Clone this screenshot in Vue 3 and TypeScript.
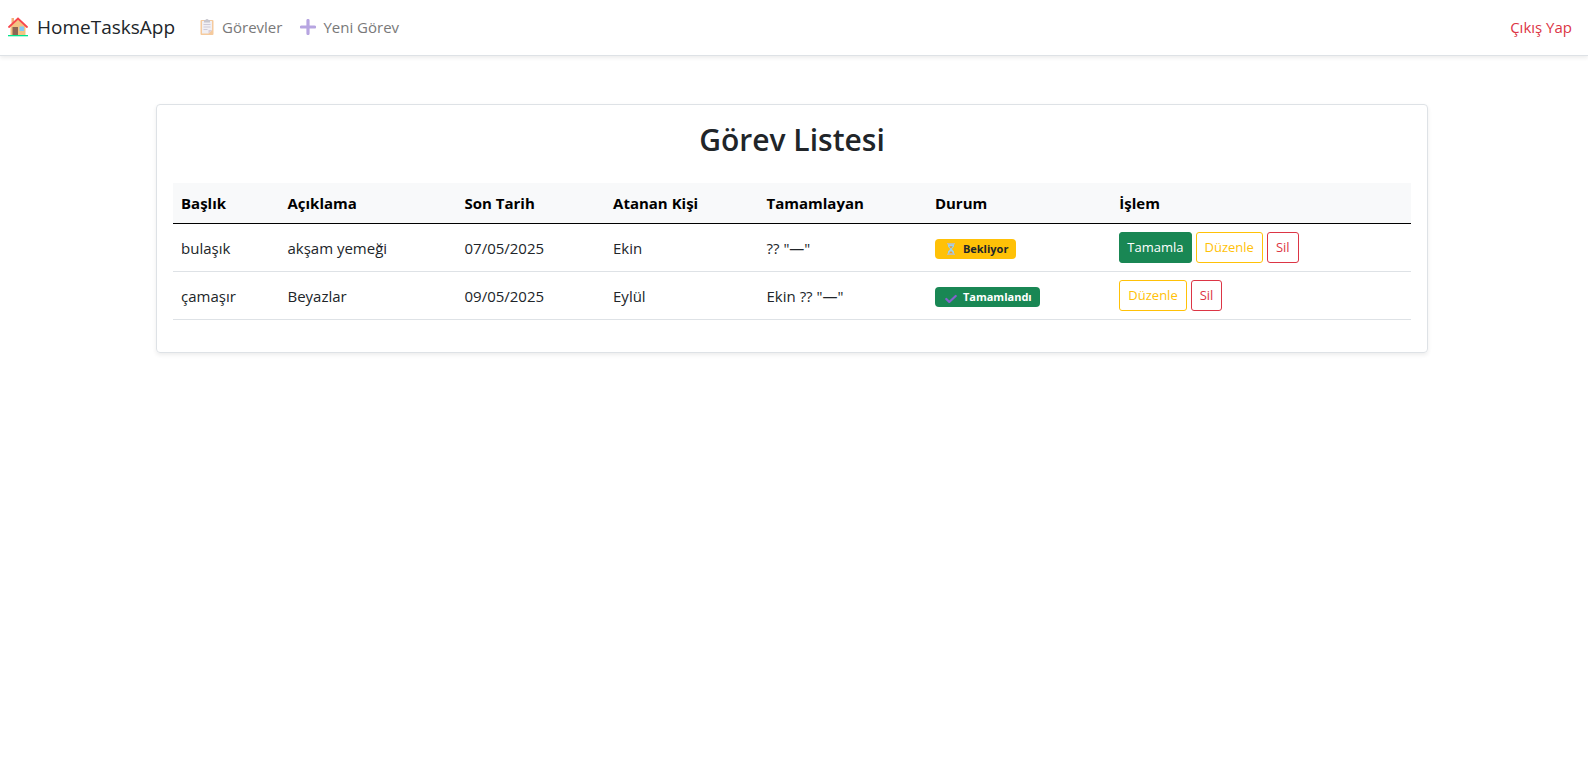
<script setup lang="ts">
interface Task {
  id: number
  title: string
  description: string
  due: string
  assignee: string
  completedBy: string
  done: boolean
}

const columns: string[] = ['Başlık', 'Açıklama', 'Son Tarih', 'Atanan Kişi', 'Tamamlayan', 'Durum', 'İşlem']

const tasks: Task[] = [
  { id: 1, title: 'bulaşık', description: 'akşam yemeği', due: '07/05/2025', assignee: 'Ekin', completedBy: '?? "—"', done: false },
  { id: 2, title: 'çamaşır', description: 'Beyazlar', due: '09/05/2025', assignee: 'Eylül', completedBy: 'Ekin ?? "—"', done: true },
]
</script>

<template>
  <div class="page">
    <nav class="navbar">
      <a class="brand" href="#">
        <svg class="brand-icon" viewBox="0 0 20 20" aria-hidden="true">
          <path d="M2.500 9 10 2l7.500 7v9.500h-15z" fill="#f3c383" />
          <path d="M3.500 1h2.500v5H3.500z" fill="#f3b27b" />
          <path d="M4.500 10h5.500v8.500H4.500z" fill="#8d6553" />
          <path d="M11.500 9.500H16V14h-4.500z" fill="#82c8f7" />
          <path d="M1 10 10 1.600 19 10" fill="none" stroke="#f8474d" stroke-width="1.800" stroke-linecap="round" />
          <path d="M0 18h20v1.300H0z" fill="#00e58b" />
        </svg>
        <span>HomeTasksApp</span>
      </a>
      <a class="nav-link" href="#">
        <svg class="nav-icon" viewBox="0 0 16 16" aria-hidden="true">
          <path d="M2.500 1h11a1 1 0 0 1 1 1v13a1 1 0 0 1-1 1h-11a1 1 0 0 1-1-1V2a1 1 0 0 1 1-1z" fill="#f5ca9d" />
          <path d="M3 2h10v9l-3.500 3.500H3z" fill="#f1eff3" />
          <path d="M9.500 14.500V11H13z" fill="#d8cdda" />
          <path d="M5 1h1.500a1.500 1 0 0 1 3 0H11v2.500H5z" fill="#c8c6ce" />
          <path d="M4.500 5.500h7M4.500 8h7M4.500 10.500h4" stroke="#cfcbd8" stroke-width="1" />
        </svg>
        <span>Görevler</span>
      </a>
      <a class="nav-link" href="#">
        <svg class="nav-icon" viewBox="0 0 16 16" aria-hidden="true">
          <path d="M8 1.500v13M1.500 8h13" fill="none" stroke="#b7a5e1" stroke-width="3.200" stroke-linecap="round" />
        </svg>
        <span>Yeni Görev</span>
      </a>
      <a class="logout" href="#">Çıkış Yap</a>
    </nav>

    <main class="content">
      <section class="card">
        <h2>Görev Listesi</h2>
        <table>
          <thead>
            <tr>
              <th v-for="column in columns" :key="column" scope="col">{{ column }}</th>
            </tr>
          </thead>
          <tbody>
            <tr v-for="task in tasks" :key="task.id">
              <td>{{ task.title }}</td>
              <td>{{ task.description }}</td>
              <td>{{ task.due }}</td>
              <td>{{ task.assignee }}</td>
              <td>{{ task.completedBy }}</td>
              <td>
                <span v-if="task.done" class="badge badge-done">
                  <svg class="badge-icon" viewBox="0 0 12 12" aria-hidden="true">
                    <path d="m1.300 8 3 3 6.400-6" fill="none" stroke="#8661cf" stroke-width="2.200" stroke-linecap="round" stroke-linejoin="round" />
                  </svg>
                  <span>Tamamlandı</span>
                </span>
                <span v-else class="badge badge-waiting">
                  <svg class="badge-icon" viewBox="0 0 12 12" aria-hidden="true">
                    <path d="M3 1h6v2.500L6.800 6 9 8.500V11H3V8.500L5.200 6 3 3.500z" fill="#9bd3ee" />
                    <path d="M4.200 3.300h3.600L6 5.500zM6 8l2.300 2.500H3.700z" fill="#ef9a2e" />
                    <path d="M2 0h8v1.500H2zM2 10.500h8V12H2z" fill="#c9bda4" />
                  </svg>
                  <span>Bekliyor</span>
                </span>
              </td>
              <td>
                <div class="actions">
                  <button v-if="!task.done" type="button" class="btn btn-complete">Tamamla</button>
                  <button type="button" class="btn btn-edit">Düzenle</button>
                  <button type="button" class="btn btn-delete">Sil</button>
                </div>
              </td>
            </tr>
          </tbody>
        </table>
      </section>
    </main>
  </div>
</template>

<style>
body {
  margin: 0;
  background: #fff;
}
</style>

<style scoped>
.page {
  color: #212529;
  font-family: "Open Sans", "Noto Sans", sans-serif;
  font-size: 15px;
  line-height: 24px;
}

.navbar {
  display: flex;
  align-items: center;
  box-sizing: border-box;
  height: 56px;
  padding: 0 16px 2px 8px;
  border-bottom: 1px solid #dee2e6;
  box-shadow: 0 2px 4px rgba(0, 0, 0, 0.075);
}

.navbar a {
  text-decoration: none;
}

.brand {
  display: flex;
  align-items: center;
  gap: 9px;
  margin-right: 16px;
  color: #212529;
  font-size: 19px;
}

.brand-icon {
  width: 20px;
  height: 20px;
}

.nav-link {
  display: flex;
  align-items: center;
  gap: 7px;
  padding: 0 8px;
  color: #797979;
}

.nav-link + .nav-link {
  margin-left: 2px;
}

.nav-icon {
  width: 16px;
  height: 16px;
}

.logout {
  margin-left: auto;
  color: #dc3545;
}

.content {
  padding: 48px 160px 48px 156px;
}

.card {
  padding: 16px;
  border: 1px solid #dee2e6;
  border-radius: 4px;
  box-shadow: 0 2px 4px rgba(0, 0, 0, 0.075);
}

h2 {
  margin: 0 0 24px;
  font-size: 30px;
  font-weight: 600;
  line-height: 38px;
  text-align: center;
}

table {
  width: 100%;
  margin-bottom: 16px;
  border-collapse: separate;
  border-spacing: 0;
  table-layout: fixed;
}

th,
td {
  box-sizing: border-box;
  padding: 8px;
  border-bottom: 1px solid #dee2e6;
  text-align: left;
  vertical-align: middle;
}

th {
  border-bottom-color: #000;
  background: #f8f9fa;
  color: #000;
  font-weight: 700;
}

th:nth-child(1) { width: 8.6%; }
th:nth-child(2) { width: 14.3%; }
th:nth-child(3) { width: 12%; }
th:nth-child(4) { width: 12.4%; }
th:nth-child(5) { width: 13.6%; }
th:nth-child(6) { width: 14.9%; }
th:nth-child(7) { width: 24.2%; }

.badge {
  display: inline-flex;
  align-items: center;
  gap: 6px;
  height: 20px;
  padding: 0 8px 0 10px;
  border-radius: 4px;
  font-size: 11px;
  font-weight: 700;
  line-height: 20px;
  vertical-align: middle;
}

.badge-icon {
  width: 12px;
  height: 12px;
}

.badge-waiting {
  background: #ffc107;
  color: #212529;
}

.badge-done {
  background: #198754;
  color: #fff;
}

.actions {
  display: flex;
  gap: 4px;
}

.btn {
  height: 31px;
  padding: 0 8px;
  border: 1px solid;
  border-radius: 3px;
  background: transparent;
  font-family: inherit;
  font-size: 13px;
  line-height: 21px;
  cursor: pointer;
}

.btn-complete {
  padding: 0 7px;
  border-color: #198754;
  background: #198754;
  color: #fff;
}

.btn-edit {
  border-color: #ffc107;
  color: #ffc107;
}

.btn-delete {
  border-color: #dc3545;
  color: #dc3545;
}
</style>
